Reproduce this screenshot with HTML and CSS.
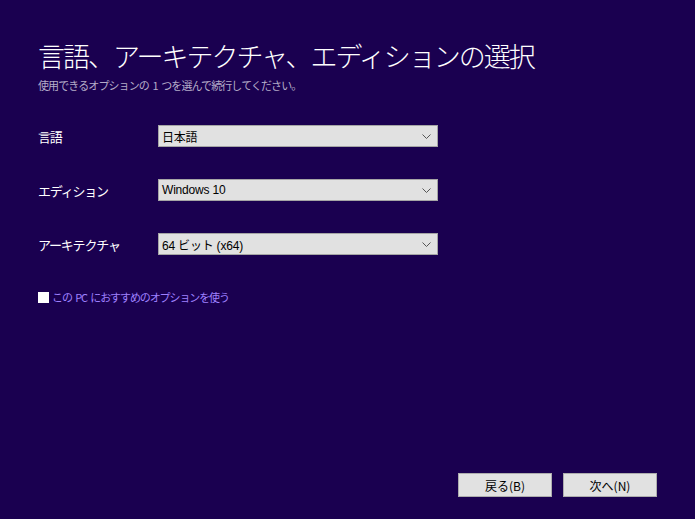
FILE: index.html
```html
<!DOCTYPE html>
<html lang="ja">
<head>
<meta charset="utf-8">
<link rel="stylesheet" href="styles.css">
</head>
<body>
<div class="page">
  <h1 class="title">言語、アーキテクチャ、エディションの選択</h1>
  <p class="subtitle">使用できるオプションの 1 つを選んで続行してください。</p>

  <div class="rows">
    <div class="row">
      <span class="label">言語</span>
      <div class="select"><span class="value">日本語</span><svg class="chev" width="9" height="5" viewBox="0 0 9 5"><path d="M0.5 0.5 L4.5 4.5 L8.5 0.5" fill="none" stroke="#555" stroke-width="1"/></svg></div>
    </div>
    <div class="row">
      <span class="label">エディション</span>
      <div class="select"><span class="value latin">Windows 10</span><svg class="chev" width="9" height="5" viewBox="0 0 9 5"><path d="M0.5 0.5 L4.5 4.5 L8.5 0.5" fill="none" stroke="#555" stroke-width="1"/></svg></div>
    </div>
    <div class="row">
      <span class="label">アーキテクチャ</span>
      <div class="select"><span class="value latin">64 ビット (x64)</span><svg class="chev" width="9" height="5" viewBox="0 0 9 5"><path d="M0.5 0.5 L4.5 4.5 L8.5 0.5" fill="none" stroke="#555" stroke-width="1"/></svg></div>
    </div>
  </div>

  <label class="check"><span class="box"></span><span class="check-text">この PC におすすめのオプションを使う</span></label>

  <div class="footer">
    <button class="btn">戻る(B)</button>
    <button class="btn">次へ(N)</button>
  </div>
</div>
</body>
</html>
```

FILE: styles.css
```css
html, body {
  margin: 0;
  padding: 0;
  height: 100%;
  background: #1a0050;
}
body {
  font-family: "Noto Sans CJK JP", "Noto Sans", sans-serif;
  color: #ffffff;
}
.page {
  height: 519px;
  box-sizing: border-box;
  padding: 0 38px 22px 38px;
  display: flex;
  flex-direction: column;
}
.title {
  margin: 35px 0 0 0;
  font-weight: 300;
  font-size: 27px;
  line-height: 42px;
  letter-spacing: -2px;
  color: #ffffff;
}
.subtitle {
  margin: 0;
  font-size: 11px;
  line-height: 16px;
  letter-spacing: -0.9px;
  word-spacing: 2px;
  color: #b4acc8;
}
.rows {
  margin-top: 32px;
  display: flex;
  flex-direction: column;
  gap: 32px;
}
.row {
  display: flex;
  align-items: center;
  height: 22px;
}
.label {
  width: 120px;
  font-size: 13px;
  letter-spacing: -1.2px;
  color: #ffffff;
}
.select {
  width: 280px;
  height: 22px;
  box-sizing: border-box;
  background: #e1e1e1;
  border: 1px solid #a5a5a5;
  display: flex;
  align-items: center;
  justify-content: space-between;
  padding: 0 6px 0 3px;
  color: #000;
}
.value {
  font-size: 12px;
  letter-spacing: -0.2px;
}
.value.latin {
  font-family: "Liberation Sans", "Noto Sans CJK JP", sans-serif;
  font-size: 12px;
}
.chev {
  display: block;
}
.check {
  margin-top: 35px;
  display: flex;
  align-items: center;
  gap: 3px;
  height: 14px;
}
.box {
  width: 11px;
  height: 11px;
  background: #ffffff;
  display: block;
}
.check-text {
  font-size: 11px;
  letter-spacing: -1.1px;
  word-spacing: 2px;
  color: #9f80ff;
}
.footer {
  margin-top: auto;
  display: flex;
  justify-content: flex-end;
  gap: 11px;
}
.btn {
  width: 94px;
  height: 24px;
  box-sizing: border-box;
  background: #e1e1e1;
  border: 1px solid #adadad;
  font-family: "Noto Sans CJK JP", sans-serif;
  font-size: 12px;
  color: #000;
  padding: 0;
  border-radius: 0;
}
```
